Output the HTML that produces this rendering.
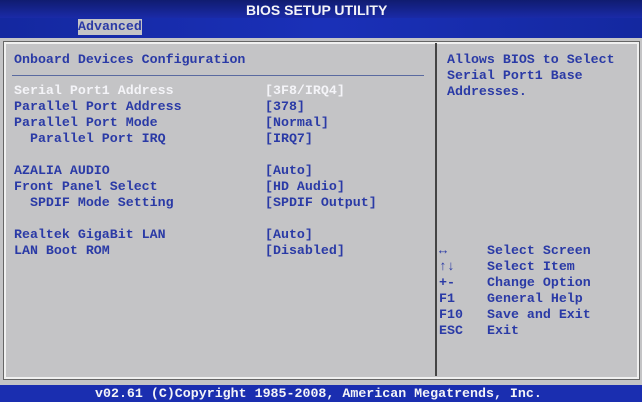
<!DOCTYPE html><html><head><style>
body{margin:0;width:642px;height:402px;overflow:hidden;background:#c4c4c6;font-family:"Liberation Mono",monospace;font-size:13.3px;font-weight:bold;}
.a{position:absolute;white-space:pre;line-height:16px;color:#2a3aa6;}
.w{color:#f4f4f8}
</style></head><body>
<div style="position:absolute;left:0;top:0;width:642px;height:38px;background:linear-gradient(90deg,#1428a0,#1a30b8 50%,#1428a0)"></div>
<div style="position:absolute;left:0;top:0;width:642px;height:18px;background:linear-gradient(180deg,#101c70,#1a2aa8)"></div>
<div class="a w" style="left:246px;top:2px;font-family:'Liberation Sans Narrow','Liberation Sans',sans-serif;font-size:14px">BIOS SETUP UTILITY</div>
<div style="position:absolute;left:78px;top:19px;width:64px;height:16px;background:#c4c4c6"></div>
<div class="a" style="left:78px;top:19px">Advanced</div>
<div style="position:absolute;left:4px;top:42px;width:631px;height:333px;border:2px solid #f0f0f0;box-shadow:0 0 0 1px #666"></div>
<div style="position:absolute;left:435px;top:43px;width:2px;height:333px;background:#444"></div>
<div style="position:absolute;left:12px;top:75px;width:412px;height:1px;background:#5a6aa0"></div>
<div class="a" style="left:14px;top:52px">Onboard Devices Configuration</div>
<div class="a w" style="left:14px;top:83px">Serial Port1 Address</div>
<div class="a" style="left:14px;top:99px">Parallel Port Address
Parallel Port Mode
  Parallel Port IRQ

AZALIA AUDIO
Front Panel Select
  SPDIF Mode Setting

Realtek GigaBit LAN
LAN Boot ROM</div>
<div class="a w" style="left:265px;top:83px">[3F8/IRQ4]</div>
<div class="a" style="left:265px;top:99px">[378]
[Normal]
[IRQ7]

[Auto]
[HD Audio]
[SPDIF Output]

[Auto]
[Disabled]</div>
<div class="a" style="left:447px;top:52px">Allows BIOS to Select
Serial Port1 Base
Addresses.</div>
<div class="a" style="left:439px;top:243px">↔
↑↓
+-
F1
F10
ESC</div>
<div class="a" style="left:487px;top:243px">Select Screen
Select Item
Change Option
General Help
Save and Exit
Exit</div>
<div style="position:absolute;left:0;top:385px;width:642px;height:17px;background:#1a2eb0"></div>
<div class="a w" style="left:95px;top:386px">v02.61 (C)Copyright 1985-2008, American Megatrends, Inc.</div>
</body></html>
